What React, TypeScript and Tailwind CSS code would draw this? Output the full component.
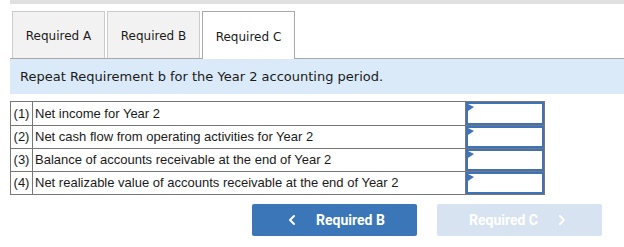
import { ChevronLeft, ChevronRight } from 'lucide-react';

const ROWS = [
  { n: '(1)', label: 'Net income for Year 2' },
  { n: '(2)', label: 'Net cash flow from operating activities for Year 2' },
  { n: '(3)', label: 'Balance of accounts receivable at the end of Year 2' },
  { n: '(4)', label: 'Net realizable value of accounts receivable at the end of Year 2' },
];

const TABS = ['Required A', 'Required B', 'Required C'];

export default function App() {
  return (
    <div className="w-[624px] h-[247px] bg-white pl-[10px] overflow-hidden">
      <div className="h-[4px] bg-[#e0e0e0]" />

      {/* tabs */}
      <div className="flex gap-[2px] pt-[7px] pl-[2px] font-['DejaVu_Sans',sans-serif] text-[12px] text-[#1a1a1a]">
        {TABS.map((t, i) => (
          <div
            key={t}
            className={
              i === 2
                ? 'w-[93px] h-[48px] flex items-center justify-center pt-[2px] bg-white border border-[#a8a8a8] border-b-0 -mb-px relative z-10'
                : 'w-[93px] h-[47px] flex items-center justify-center pt-[2px] bg-[#f2f2f2] border border-[#cbcbcb] border-b-0'
            }
          >
            {t}
          </div>
        ))}
      </div>

      <div className="h-[36px] bg-[#daeaf8] border-t border-[#a8a8a8] flex items-center pl-[10px] font-['DejaVu_Sans',sans-serif] text-[13px] text-[#1a1a1a]">
        Repeat Requirement b for the Year 2 accounting period.
      </div>

      {/* table */}
      <div className="mt-[7px] flex font-['Liberation_Sans',sans-serif] text-[13px] text-[#1a1a1a]">
        <div className="w-[455px] border border-[#777] border-r-0">
          {ROWS.map((r, i) => (
            <div key={r.n} className={'flex h-[23px] ' + (i > 0 ? 'border-t border-[#777]' : '')}>
              <div className="w-[22px] border-r border-[#777] flex items-center justify-center">{r.n}</div>
              <div className="flex items-center pl-[2px]">{r.label}</div>
            </div>
          ))}
        </div>
        <div className="w-[80px] border border-[#777]">
          {ROWS.map((r, i) => (
            <div key={r.n} className={'h-[23px] ' + (i > 0 ? 'border-t border-[#777]' : '')}>
              <div className="relative h-full border-2 border-[#3f73b6] bg-white">
                <svg className="absolute left-0 top-0" width="6" height="8" viewBox="0 0 6 8">
                  <path d="M0 0 L6 3 L0 7 Z" fill="#3f73b6" />
                </svg>
              </div>
            </div>
          ))}
        </div>
      </div>

      {/* buttons */}
      <div className="mt-[9px] pl-[242px] flex gap-[20px] font-['Roboto',sans-serif] font-bold text-[14px]">
        <button className="w-[165px] h-[32px] rounded-[2px] bg-[#3a76b8] text-white flex items-center justify-center gap-[16px]">
          <ChevronLeft size={16} strokeWidth={3} />
          <span>Required B</span>
        </button>
        <button className="w-[165px] h-[32px] rounded-[2px] bg-[#d7e3f0] text-white flex items-center justify-center gap-[16px]">
          <span>Required C</span>
          <ChevronRight size={16} strokeWidth={3} />
        </button>
      </div>
    </div>
  );
}
